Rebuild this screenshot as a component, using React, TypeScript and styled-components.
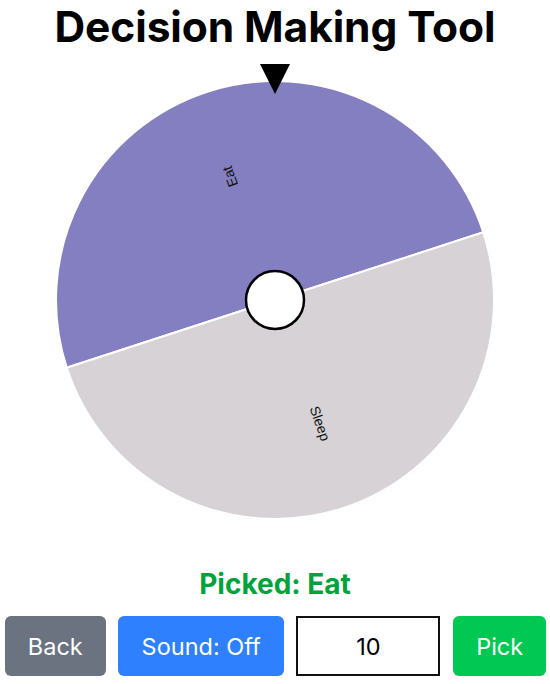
import React from "react";
import styled, { createGlobalStyle } from "styled-components";

const GlobalStyle = createGlobalStyle`
  html, body { margin: 0; padding: 0; background: #ffffff; }
  body { font-family: Inter, "Liberation Sans", Arial, sans-serif; }
`;

const Page = styled.div`
  display: flex;
  flex-direction: column;
  align-items: center;
  width: 550px;
`;

const Title = styled.h1`
  margin: 0;
  font-size: 42.5px;
  line-height: 54px;
  font-weight: 700;
  color: #000;
  letter-spacing: -0.1px;
`;

const WheelArea = styled.div`
  margin-top: 10px;
  width: 440px;
  height: 458px;
`;

const Result = styled.div`
  margin-top: 45px;
  font-size: 28px;
  line-height: 34px;
  font-weight: 700;
  color: #00a23c;
`;

const Controls = styled.div`
  margin-top: 15px;
  margin-left: 1px;
  display: flex;
  gap: 12.5px;
  align-items: stretch;
  justify-content: center;
`;

const Button = styled.button<{ $bg: string }>`
  height: 60px;
  padding: 0 23.2px;
  border: none;
  border-radius: 6px;
  background: ${(p) => p.$bg};
  color: #fff;
  font-family: Inter, "Liberation Sans", Arial, sans-serif;
  font-size: 23.5px;
  font-weight: 400;
  cursor: pointer;
`;

const NumberInput = styled.input`
  box-sizing: border-box;
  width: 144px;
  height: 60px;
  border: 2px solid #111;
  border-radius: 0;
  text-align: center;
  font-family: Inter, "Liberation Sans", Arial, sans-serif;
  font-size: 23.5px;
  color: #000;
  outline: none;
  padding: 0;
  -moz-appearance: textfield;
  &::-webkit-inner-spin-button,
  &::-webkit-outer-spin-button {
    -webkit-appearance: none;
    margin: 0;
  }
`;

const CX = 220;
const CY = 236;
const R = 219;

const slices = [
  { label: "Eat", color: "#837fc0", start: -198, end: -18 },
  { label: "Sleep", color: "#d6d2d6", start: -18, end: 162 },
];

function polar(angleDeg: number, r: number) {
  const a = (angleDeg * Math.PI) / 180;
  return [CX + r * Math.cos(a), CY + r * Math.sin(a)];
}

function Wheel() {
  return (
    <svg width="440" height="458" viewBox="0 0 440 458">
      {slices.map((s) => {
        const [x1, y1] = polar(s.start, R);
        const [x2, y2] = polar(s.end, R);
        const d = `M ${CX} ${CY} L ${x1} ${y1} A ${R} ${R} 0 0 1 ${x2} ${y2} Z`;
        return <path key={s.label} d={d} fill={s.color} stroke="#fff" strokeWidth={2} />;
      })}
      {slices.map((s) => {
        const mid = (s.start + s.end) / 2 - 1.5;
        const [lx, ly] = polar(mid, R * 0.6);
        return (
          <text
            key={s.label + "t"}
            x={lx}
            y={ly}
            fill="#111"
            fontFamily="'Liberation Sans', Arial, sans-serif"
            fontSize="14"
            textAnchor="middle"
            dominantBaseline="middle"
            transform={`rotate(${mid} ${lx} ${ly})`}
          >
            {s.label}
          </text>
        );
      })}
      <circle cx={CX} cy={CY} r={29} fill="#fff" stroke="#000" strokeWidth={2.5} />
      <polygon points={`${CX - 15},0 ${CX + 15},0 ${CX},30`} fill="#000" />
    </svg>
  );
}

export default function App() {
  return (
    <Page>
      <GlobalStyle />
      <Title>Decision Making Tool</Title>
      <WheelArea>
        <Wheel />
      </WheelArea>
      <Result>Picked: Eat</Result>
      <Controls>
        <Button $bg="#6b7280">Back</Button>
        <Button $bg="#2f80ff">Sound: Off</Button>
        <NumberInput type="number" defaultValue={10} />
        <Button $bg="#00c853">Pick</Button>
      </Controls>
    </Page>
  );
}
